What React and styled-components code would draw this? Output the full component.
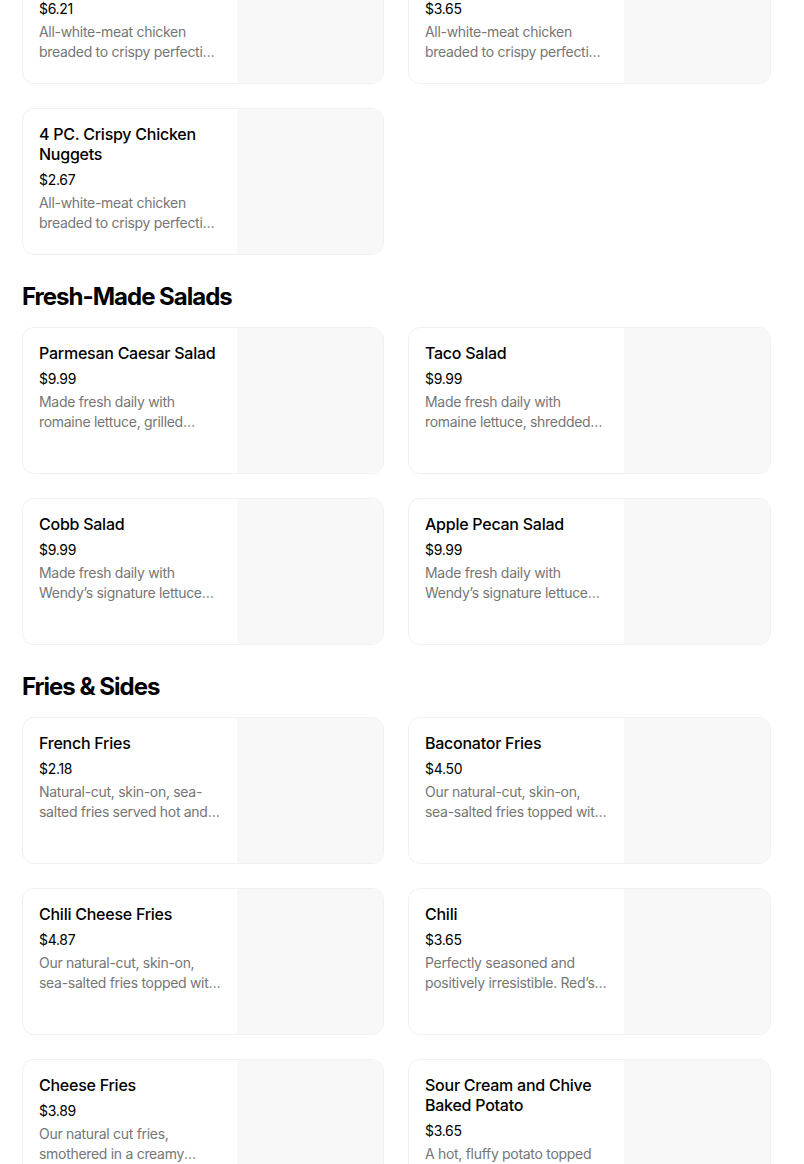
import React from "react";
import styled, { createGlobalStyle } from "styled-components";

const Global = createGlobalStyle`
  html, body { margin: 0; padding: 0; background: #ffffff; }
  body { font-family: Inter, "Liberation Sans", Arial, sans-serif; color: #000; }
  * { box-sizing: border-box; }
`;

const Page = styled.main`
  width: 804px;
  padding: 0 33px 0 22px;
  margin-top: -63px;
`;

const Section = styled.section`
  display: flex;
  flex-direction: column;
`;

const Heading = styled.h2`
  margin: 26px 0 14px;
  font-size: 24px;
  line-height: 32px;
  font-weight: 700;
  letter-spacing: -1px;
  color: #000;
`;

const Grid = styled.div`
  display: grid;
  grid-template-columns: 362px 363px;
  column-gap: 24px;
  row-gap: 24px;
`;

const Card = styled.div`
  display: flex;
  height: 147px;
  border: 1px solid #f1f1f1;
  border-radius: 12px;
  overflow: hidden;
  background: #fff;
`;

const Info = styled.div`
  flex: 1;
  min-width: 0;
  padding: 15px 16px 16px 16px;
  display: flex;
  flex-direction: column;
`;

const Title = styled.div`
  font-size: 16px;
  line-height: 20px;
  font-weight: 500;
  letter-spacing: -0.25px;
  color: #000;
`;

const Price = styled.div`
  margin-top: 6px;
  font-size: 14px;
  line-height: 20px;
  font-weight: 400;
  color: #000;
  letter-spacing: -0.3px;
`;

const Desc = styled.div`
  margin-top: 3px;
  font-size: 14px;
  line-height: 20px;
  letter-spacing: -0.3px;
  color: #767676;
  display: -webkit-box;
  -webkit-line-clamp: 2;
  -webkit-box-orient: vertical;
  overflow: hidden;
`;

const Photo = styled.div`
  width: 146px;
  flex: 0 0 146px;
  background: #f8f8f8;
`;

const sections = [
  {
    title: null,
    items: [
      { t: "10 PC. Crispy Chicken Nuggets", p: "$6.21", d: "All-white-meat chicken breaded to crispy perfection and served with your choice of dipping sauce." },
      { t: "6 PC. Crispy Chicken Nuggets", p: "$3.65", d: "All-white-meat chicken breaded to crispy perfection and served with your choice of dipping sauce." },
      { t: "4 PC. Crispy Chicken Nuggets", p: "$2.67", d: "All-white-meat chicken breaded to crispy perfection and served with your choice of dipping sauce." },
    ],
  },
  {
    title: "Fresh-Made Salads",
    items: [
      { t: "Parmesan Caesar Salad", p: "$9.99", d: "Made fresh daily with romaine lettuce, grilled chicken, shaved parmesan and croutons." },
      { t: "Taco Salad", p: "$9.99", d: "Made fresh daily with romaine lettuce, shredded cheddar cheese, chili and tortilla chips." },
      { t: "Cobb Salad", p: "$9.99", d: "Made fresh daily with Wendy’s signature lettuce blend, grilled chicken and bacon." },
      { t: "Apple Pecan Salad", p: "$9.99", d: "Made fresh daily with Wendy’s signature lettuce blend, apples and roasted pecans." },
    ],
  },
  {
    title: "Fries & Sides",
    items: [
      { t: "French Fries", p: "$2.18", d: "Natural-cut, skin-on, sea-salted fries served hot and crispy." },
      { t: "Baconator Fries", p: "$4.50", d: "Our natural-cut, skin-on, sea-salted fries topped with cheese sauce and bacon." },
      { t: "Chili Cheese Fries", p: "$4.87", d: "Our natural-cut, skin-on, sea-salted fries topped with chili and cheese." },
      { t: "Chili", p: "$3.65", d: "Perfectly seasoned and positively irresistible. Red’s original recipe chili." },
      { t: "Cheese Fries", p: "$3.89", d: "Our natural cut fries, smothered in a creamy cheese sauce." },
      { t: "Sour Cream and Chive Baked Potato", p: "$3.65", d: "A hot, fluffy potato topped with sour cream and chives." },
    ],
  },
];

export default function App() {
  return (
    <>
      <Global />
      <Page>
        {sections.map((s, i) => (
          <Section key={i}>
            {s.title && <Heading>{s.title}</Heading>}
            <Grid>
              {s.items.map((it) => (
                <Card key={it.t}>
                  <Info>
                    <Title>{it.t}</Title>
                    <Price>{it.p}</Price>
                    <Desc>{it.d}</Desc>
                  </Info>
                  <Photo />
                </Card>
              ))}
            </Grid>
          </Section>
        ))}
      </Page>
    </>
  );
}
